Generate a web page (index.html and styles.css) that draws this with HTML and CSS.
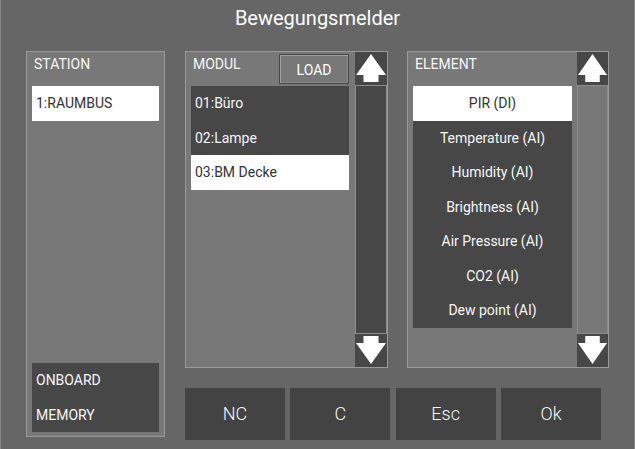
FILE: index.html
```html
<!DOCTYPE html>
<html>
<head>
<meta charset="utf-8">
<link rel="stylesheet" href="styles.css">
</head>
<body>
<div class="app">
  <div class="title">Bewegungsmelder</div>
  <div class="main">
    <div class="station panel">
      <div class="head">STATION</div>
      <div class="list">
        <div class="row sel">1:RAUMBUS</div>
      </div>
      <div class="spacer"></div>
      <div class="list dark">
        <div class="row">ONBOARD</div>
        <div class="row">MEMORY</div>
      </div>
    </div>
    <div class="right">
      <div class="panels">
        <div class="panel modul">
          <div class="pmain">
            <div class="head headrow">
              <span>MODUL</span>
              <button class="load">LOAD</button>
            </div>
            <div class="list dark">
              <div class="row">01:Büro</div>
              <div class="row">02:Lampe</div>
              <div class="row sel">03:BM Decke</div>
            </div>
          </div>
          <div class="scroll">
            <div class="sbtn"><svg viewBox="0 0 32 33" preserveAspectRatio="none"><polygon points="16,2 31,23 23.5,23 23.5,30 8.5,30 8.5,23 1,23" fill="#fff"/></svg></div>
            <div class="track dtrack"></div>
            <div class="sbtn"><svg viewBox="0 0 32 33" preserveAspectRatio="none"><polygon points="8.5,2 23.5,2 23.5,9 31,9 16,30 1,9 8.5,9" fill="#fff"/></svg></div>
          </div>
        </div>
        <div class="panel element">
          <div class="pmain">
            <div class="head">ELEMENT</div>
            <div class="list dark center">
              <div class="row sel">PIR (DI)</div>
              <div class="row">Temperature (AI)</div>
              <div class="row">Humidity (AI)</div>
              <div class="row">Brightness (AI)</div>
              <div class="row">Air Pressure (AI)</div>
              <div class="row">CO2 (AI)</div>
              <div class="row">Dew point (AI)</div>
            </div>
          </div>
          <div class="scroll">
            <div class="sbtn"><svg viewBox="0 0 32 33" preserveAspectRatio="none"><polygon points="16,2 31,23 23.5,23 23.5,30 8.5,30 8.5,23 1,23" fill="#fff"/></svg></div>
            <div class="track ltrack"></div>
            <div class="sbtn"><svg viewBox="0 0 32 33" preserveAspectRatio="none"><polygon points="8.5,2 23.5,2 23.5,9 31,9 16,30 1,9 8.5,9" fill="#fff"/></svg></div>
          </div>
        </div>
      </div>
      <div class="buttons">
        <div class="btn">NC</div>
        <div class="btn">C</div>
        <div class="btn">Esc</div>
        <div class="btn">Ok</div>
      </div>
    </div>
  </div>
</div>
</body>
</html>
```
FILE: styles.css
```css
* { box-sizing: border-box; }
html, body { margin: 0; padding: 0; background: #666; }
.app {
  width: 635px;
  height: 449px;
  background: #666;
  border-left: 1px solid #858585;
  border-right: 1px solid #858585;
  font-family: Roboto, "Liberation Sans", sans-serif;
  color: #f6f6f6;
  overflow: hidden;
}
.title {
  height: 51px;
  padding-top: 1px;
  line-height: 34px;
  text-align: center;
  font-size: 20px;
  color: #fff;
}
.main {
  display: flex;
  padding-left: 25px;
  gap: 20px;
}
.panel {
  background: #787878;
  border: 1px solid #9a9a9a;
}
.station {
  width: 139px;
  height: 386px;
  padding: 0 5px 4px 5px;
  display: flex;
  flex-direction: column;
}
.spacer { flex: 1; }
.head {
  height: 34px;
  padding: 2px 0 0 2px;
  font-size: 14px;
  line-height: 20px;
  color: #f6f6f6;
}
.headrow {
  display: flex;
  justify-content: space-between;
  align-items: flex-start;
}
.load {
  width: 70px;
  height: 30px;
  background: #787878;
  border: 1px solid #474747;
  box-shadow: inset 1px 1px 0 #a0a0a0, inset -1px -1px 0 #8a8a8a;
  font-family: Roboto, "Liberation Sans", sans-serif;
  font-size: 14px;
  color: #fff;
  padding: 2px 0 0 0;
}
.list { display: flex; flex-direction: column; }
.dark { background: #474747; }
.row {
  height: 34.5px;
  line-height: 34.5px;
  font-size: 14px;
  padding-left: 4px;
  white-space: nowrap;
}
.center .row { padding-left: 0; text-align: center; }
.sel { background: #fff; color: #333; }
.right {
  display: flex;
  flex-direction: column;
  gap: 20px;
}
.panels {
  display: flex;
  gap: 19px;
}
.modul, .element {
  height: 317px;
  display: flex;
}
.modul { width: 203px; }
.element { width: 202px; }
.pmain {
  width: 169px;
  padding: 0 5px;
}
.modul .pmain { padding-right: 6px; }
.scroll {
  flex: 1;
  display: flex;
  flex-direction: column;
}
.sbtn {
  height: 33px;
  background: #474747;
}
.sbtn svg { display: block; width: 100%; height: 33px; }
.track {
  flex: 1;
  border: 1px solid #8c8c8c;
}
.dtrack { background: #474747; }
.ltrack { background: #787878; }
.buttons {
  display: grid;
  grid-template-columns: repeat(4, 100px);
  column-gap: 5.33px;
  height: 52px;
}
.btn {
  background: #434343;
  color: #f6f6f6;
  font-size: 18px;
  font-weight: 300;
  line-height: 52px;
  text-align: center;
}
```
